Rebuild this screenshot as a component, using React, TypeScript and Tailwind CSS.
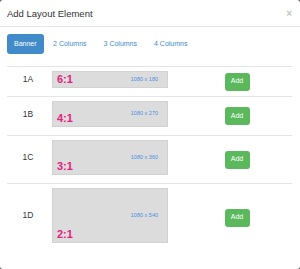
const rows = [
  { id: '1A', ratio: '6:1', size: '1080 x 180', h: 'h-[17px]' },
  { id: '1B', ratio: '4:1', size: '1080 x 270', h: 'h-[26px]' },
  { id: '1C', ratio: '3:1', size: '1080 x 360', h: 'h-[35px]' },
  { id: '1D', ratio: '2:1', size: '1080 x 540', h: 'h-[55px]' },
];

const tabs = ['Banner', '2 Columns', '3 Columns', '4 Columns'];

const App = () => (
  <div className="w-[300px] h-[269px] bg-[#555] font-['Liberation_Sans',Arial,sans-serif]">
    <div className="h-full bg-white rounded-[3px] overflow-hidden">
      {/* header */}
      <div className="flex items-center justify-between h-[27px] pl-[7px] pr-[8px] pt-[1px] border-b border-[#e5e5e5]">
        <h4 className="text-[9.5px] leading-none text-[#333]">Add Layout Element</h4>
        <span className="text-[10px] leading-none font-bold text-[#c4c4c4]">×</span>
      </div>

      <div className="px-[7px]">
        {/* tabs */}
        <div className="flex items-center gap-[2px] mt-[7px] mb-[12px]">
          {tabs.map((t, i) => (
            <span
              key={t}
              className={
                i === 0
                  ? 'h-[20px] px-[7px] flex items-center rounded-[3px] bg-[#428bca] text-white text-[7px]'
                  : 'h-[20px] px-[7.5px] flex items-center text-[#428bca] text-[7px]'
              }
            >
              {t}
            </span>
          ))}
        </div>

        {/* rows */}
        <div className="w-[285px]">
          {rows.map((r) => (
            <div key={r.id} className="flex items-center border-t border-[#e5e5e5] pt-[4px] pb-[8px]">
              <div className="w-[42px] text-center text-[8.5px] text-[#333]">{r.id}</div>
              <div className="w-[3px]" />
              <div className={`relative w-[116px] ${r.h} bg-[#dcdcdc] border border-[#d2d2d2] flex items-center justify-end pr-[9px]`}>
                <span className="text-[5.5px] leading-none text-[#4a90e2]">{r.size}</span>
                <span className="absolute left-[4px] bottom-[2px] text-[11px] leading-none font-bold text-[#e5217f]">
                  {r.ratio}
                </span>
              </div>
              <div className="flex-1 flex justify-center pl-[14px] -mb-[4px]">
                <button className="w-[25px] h-[18px] rounded-[3px] bg-[#5cb85c] text-white text-[7px]">Add</button>
              </div>
            </div>
          ))}
        </div>
      </div>
    </div>
  </div>
);

export default App;
